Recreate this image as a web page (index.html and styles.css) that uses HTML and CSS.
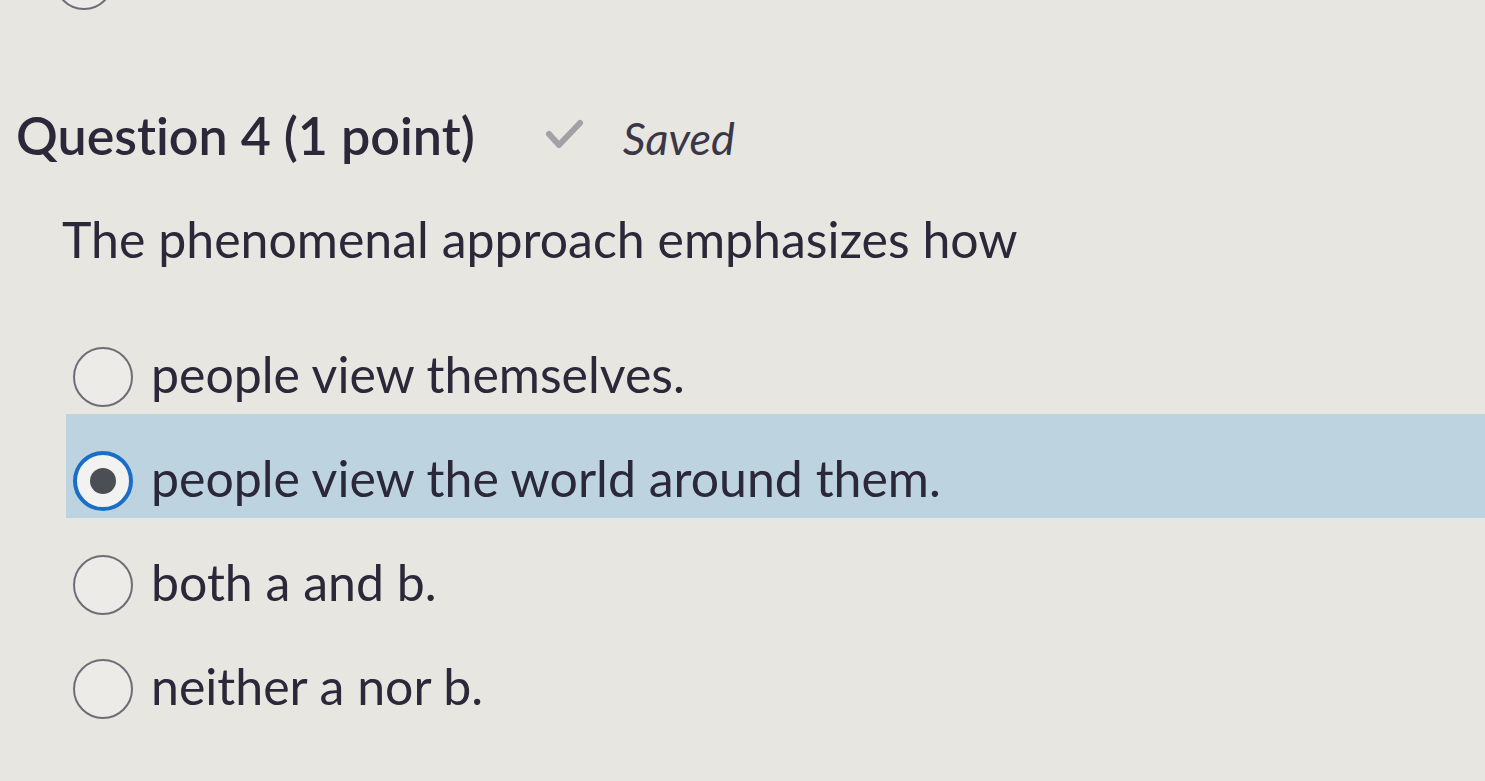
FILE: index.html
```html
<!DOCTYPE html>
<html lang="en">
<head>
<meta charset="utf-8">
<title>Question 4</title>
<link rel="stylesheet" href="styles.css">
</head>
<body>
<div class="page">
  <div class="prev">
    <span class="radio"></span>
  </div>
  <div class="qhead">
    <h2 class="qtitle">Question 4 (1 point)</h2>
    <span class="saved">
      <svg class="check" viewBox="0 0 40 32" width="40" height="32" aria-hidden="true">
        <path d="M4 15 L14 26 L35 4" fill="none" stroke="#a2a2a6" stroke-width="6" stroke-linecap="round" stroke-linejoin="round"/>
      </svg>
      <span class="saved-text">Saved</span>
    </span>
  </div>
  <p class="qtext">The phenomenal approach emphasizes how</p>
  <div class="options">
    <label class="opt"><span class="radio"></span><span class="otext">people view themselves.</span></label>
    <label class="opt selected"><span class="radio checked"></span><span class="otext">people view the world around them.</span></label>
    <label class="opt"><span class="radio"></span><span class="otext">both a and b.</span></label>
    <label class="opt"><span class="radio"></span><span class="otext">neither a nor b.</span></label>
  </div>
</div>
</body>
</html>
```

FILE: styles.css
```css
html, body {
  margin: 0;
  padding: 0;
  background: #e8e6e1;
}
body {
  font-family: Lato, "Noto Sans", sans-serif;
  color: #2b2839;
  overflow: hidden;
  height: 781px;
  font-variant-ligatures: none;
}
.page {
  padding-left: 16px;
}
.prev {
  height: 10px;
  overflow: hidden;
  padding-left: 38px;
}
.prev .radio {
  margin-top: -50px;
}
.qhead {
  display: flex;
  align-items: baseline;
  margin-top: 95px;
  height: 70px;
}
.qtitle {
  margin: 0;
  font-size: 52px;
  font-weight: 600;
  line-height: 60px;
}
.saved {
  display: inline-flex;
  align-items: baseline;
  margin-left: 70px;
}
.check {
  align-self: center;
  margin-right: 38px;
  position: relative;
  top: -3px;
}
.saved-text {
  font-style: italic;
  font-size: 45px;
  color: #3a3748;
}
.qtext {
  margin: 34px 0 0 46px;
  font-size: 50px;
  line-height: 60px;
}
.opt-spacer {
  display: none;
}
.options {
  margin-top: 41px;
  margin-left: 50px;
}
.opt {
  display: flex;
  align-items: flex-start;
  height: 104px;
  box-sizing: border-box;
  padding-top: 37px;
  padding-left: 7px;
}
.opt.selected {
  background: #bdd3df;
}
.radio {
  display: block;
  width: 60px;
  height: 60px;
  box-sizing: border-box;
  border: 2.5px solid #6f6c78;
  border-radius: 50%;
  background: #ecebe7;
  flex: none;
}
.radio.checked {
  border: 4.5px solid #1b6ec7;
  background: #f2f2f0;
  position: relative;
}
.radio.checked::after {
  content: "";
  position: absolute;
  left: 50%;
  top: 50%;
  width: 26px;
  height: 26px;
  margin: -13px 0 0 -13px;
  border-radius: 50%;
  background: #4b4e54;
}
.otext {
  margin-left: 18px;
  margin-top: -3px;
  font-size: 50px;
  line-height: 60px;
}
```
